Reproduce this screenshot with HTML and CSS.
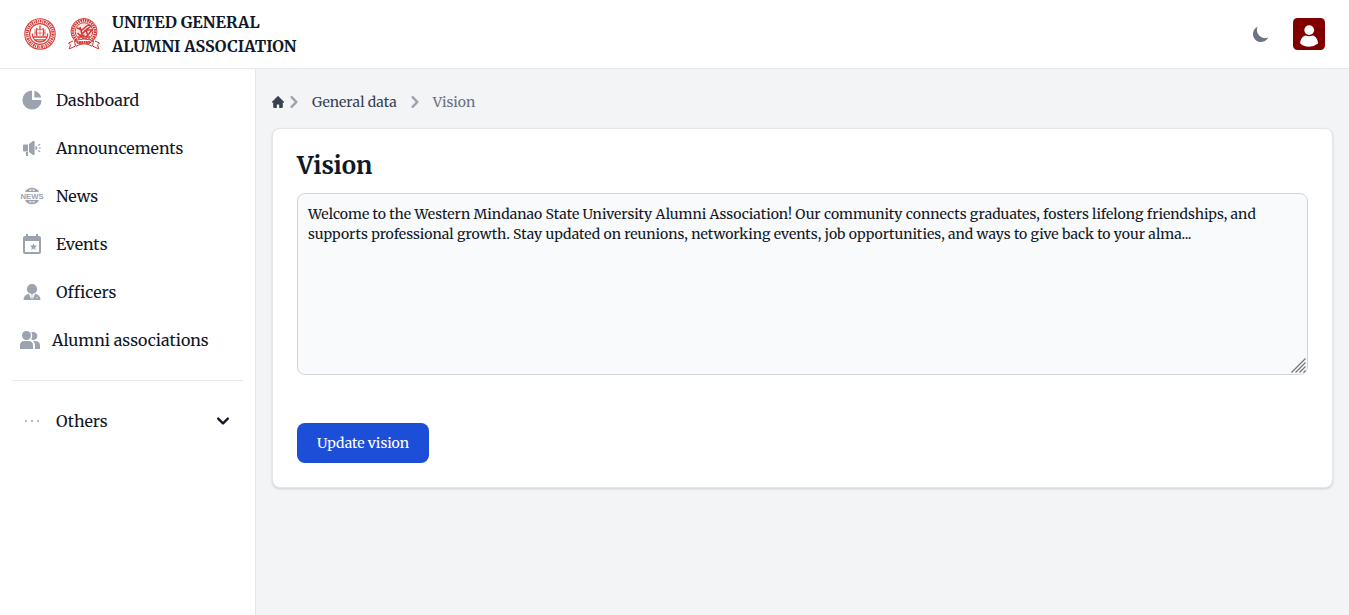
FILE: index.html
```html
<!DOCTYPE html>
<html lang="en">
<head>
<meta charset="utf-8">
<title>Vision</title>
<link rel="stylesheet" href="styles.css">
</head>
<body>
<header class="topbar">
  <div class="brand">
    <svg class="seal" width="32" height="32" viewBox="0 0 32 32" fill="none" stroke="#d8403c">
      <circle cx="16" cy="16" r="15.2" stroke-width="1.1"/>
      <circle cx="16" cy="16" r="12.9" stroke-width="3" stroke-dasharray="1.700 .9 1 .7"/>
      <circle cx="16" cy="16" r="10.400" stroke-width="1.2"/>
      <path d="M8.500 15.500v2q1 6 7.500 6.500 6.500-.5 7.500-6.500v-2M16 7.500v5M13 10q-1.500 4 0 8M19 10q1.500 4 0 8M9.500 19h13M11 21.800h10" stroke-width="1.300"/>
      <path d="M11 11v7M21 11v7M16 13v5M12.500 11.500h7M10.500 15h11" stroke-width="1" opacity=".6"/>
    </svg>
    <svg class="seal" width="32" height="32" viewBox="0 0 32 32" fill="none" stroke="#d33a36">
      <circle cx="16" cy="13.500" r="13" stroke-width="1"/>
      <circle cx="16" cy="13.500" r="11.100" stroke-width="2.8" stroke-dasharray="1.6 .7"/>
      <circle cx="16" cy="13.500" r="8.800" stroke-width="1" fill="#fbe3e1"/>
      <path d="M9 10l5 2 6-5 3 1-5 4 6 0-4 5-3 2M9.500 15q3 4 7 2M12 9l2 7 4-4 2 6M10 19h12M14 21h5" stroke-width="1.5"/>
      <path d="M5 23l-4.500 2 2 2-1.300 4 6.300-3-1-5q9.500-4 19 0l-1 5 6.300 3-1.300-4 2-2-4.500-2M8 28.300q8-5 16 0" fill="#fff" stroke-width="1"/>
      <path d="M9 25.300q7-3 14 0" stroke-width="1.7" stroke-dasharray="1.5 .9"/>
    </svg>
    <div class="brand-name">UNITED GENERAL<br>ALUMNI ASSOCIATION</div>
  </div>
  <div class="actions">
    <svg class="moon" width="20" height="20" viewBox="0 0 20 20" fill="currentColor"><path d="M17.293 13.293A8 8 0 016.707 2.707a8.001 8.001 0 1010.586 10.586z"/></svg>
    <svg class="avatar" width="32" height="32" viewBox="0 0 32 32"><rect width="32" height="32" rx="4.5" fill="#800000"/><circle cx="16.2" cy="12.1" r="4.9" fill="#fff"/><path d="M7.2 25.500C7.200 20 11 17.700 12.600 17.400q3.600 1.600 7.200 0C22 18 25 20.500 25 25.500Q21 28.700 16 28.700T7.200 25.500z" fill="#fff"/></svg>
  </div>
</header>
<div class="shell">
  <aside class="sidebar">
    <nav class="menu">
      <a class="item"><svg class="icon" width="24" height="24" viewBox="0 0 20 20" fill="currentColor"><path d="M2 10a8 8 0 018-8v8h8a8 8 0 11-16 0z"/><path d="M12 2.252A8.014 8.014 0 0117.748 8H12V2.252z"/></svg><span class="label">Dashboard</span></a>
      <a class="item"><svg class="icon" width="24" height="24" viewBox="0 0 24 24" fill="currentColor"><path d="M4 8.500h4v7H4q-1-.1-1-1v-5q0-.9 1-1zM9 8l4-3h1.600v14H13l-4-3zM6 16h2v4H6zM15.400 10q2 .1 2 2t-2 2z"/><path d="M18.200 9.400l2-1.200M18.700 12h2.100M18.200 14.600l2 1.200" fill="none" stroke="currentColor" stroke-width="1.2"/></svg><span class="label">Announcements</span></a>
      <a class="item"><svg class="icon" width="24" height="24" viewBox="0 0 24 24"><g fill="none" stroke="currentColor" stroke-width="1.3"><path d="M5.500 7.600q2.600-3.300 6.500-3.300t6.500 3.300M5.500 16.400q2.600 3.300 6.500 3.300t6.500-3.300M6.500 7.300h11M6.500 16.700h11M12 4.500v3M12 16.500v3M9.800 5q-1.600 1-2 2.500M14.200 5q1.600 1 2 2.500M9.800 19q-1.600-1-2-2.500M14.200 19q1.600-1 2-2.500"/></g><text class="news-text" x="12" y="14.900" text-anchor="middle" textLength="23" lengthAdjust="spacingAndGlyphs">NEWS</text></svg><span class="label">News</span></a>
      <a class="item"><svg class="icon" width="24" height="24" viewBox="0 0 24 24" fill="currentColor" fill-rule="evenodd"><path d="M6 2h2v2h8V2h2v2h1q2 0 2 2v14q0 2-2 2H5q-2 0-2-2V6q0-2 2-2h1zM5 9v11h14V9z"/><path d="M13.500 11.200l1 2.400 2.600.2-2 1.700.6 2.500-2.200-1.400-2.200 1.400.6-2.500-2-1.700 2.600-.2z"/></svg><span class="label">Events</span></a>
      <a class="item"><svg class="icon" width="24" height="24" viewBox="0 0 24 24" fill="currentColor"><circle cx="12" cy="9" r="5.100"/><path d="M3.500 20q0-5 5.500-6.200l2.200 5.700.6-3.500-.7-1.500h1.800l-.7 1.500.6 3.500 2.200-5.700q5.500 1.200 5.500 6.200z"/><path d="M16 17.500h2" stroke="#fff" stroke-width=".5"/></svg><span class="label">Officers</span></a>
      <a class="item"><svg class="icon" width="20" height="20" viewBox="0 0 20 20" fill="currentColor"><circle cx="6.500" cy="5.500" r="4.500"/><path d="M0 19v-3.500Q0 11 4.500 11h4Q13 11 13 15.500V19zM11.200 9.300q2-3.800 0-7Q12.500 2 14 2a4 4 0 11-2.800 7.300zM13 11h2q5 0 5 4.500V19h-5v-4q0-2.300-2-4z"/></svg><span class="label">Alumni associations</span></a>
    </nav>
    <div class="others">
      <a class="item"><svg class="icon" width="24" height="24" viewBox="0 0 24 24" fill="currentColor"><path d="M5 11h2v2H5zM11 11h2v2h-2zM17 11h2v2h-2z" opacity=".75"/></svg><span class="label">Others</span><svg class="caret" width="24" height="24" viewBox="0 0 20 20" fill="currentColor"><path d="M5.293 7.293a1 1 0 011.414 0L10 10.586l3.293-3.293a1 1 0 111.414 1.414l-4 4a1 1 0 01-1.414 0l-4-4a1 1 0 010-1.414z"/></svg></a>
    </div>
  </aside>
  <main class="content">
    <nav class="crumbs">
      <svg class="home" width="12" height="12" viewBox="0 0 20 20" fill="currentColor"><path d="M19.707 9.293l-2-2-7-7a1 1 0 00-1.414 0l-7 7-2 2a1 1 0 001.414 1.414L2 10.414V18a2 2 0 002 2h3a1 1 0 001-1v-4a1 1 0 011-1h2a1 1 0 011 1v4a1 1 0 001 1h3a2 2 0 002-2v-7.586l.293.293a1 1 0 001.414-1.414z"/></svg>
      <svg class="sep sep-first" width="24" height="24" viewBox="0 0 20 20" fill="currentColor"><path d="M7.293 14.707a1 1 0 010-1.414L10.586 10 7.293 6.707a1 1 0 011.414-1.414l4 4a1 1 0 010 1.414l-4 4a1 1 0 01-1.414 0z"/></svg>
      <span class="crumb">General data</span>
      <svg class="sep" width="24" height="24" viewBox="0 0 20 20" fill="currentColor"><path d="M7.293 14.707a1 1 0 010-1.414L10.586 10 7.293 6.707a1 1 0 011.414-1.414l4 4a1 1 0 010 1.414l-4 4a1 1 0 01-1.414 0z"/></svg>
      <span class="crumb current">Vision</span>
    </nav>
    <section class="card">
      <h1 class="title">Vision</h1>
      <div class="field">
        <div class="editor"><span>Welcome to the Western Mindanao State University Alumni Association! Our community connects graduates, fosters lifelong friendships, and</span><br><span>supports professional growth. Stay updated on reunions, networking events, job opportunities, and ways to give back to your alma...</span></div>
        <svg class="grip" width="16" height="16" viewBox="0 0 16 16" fill="none" stroke="#777" stroke-width="1.300"><path d="M.5 14.500l14-14M4.500 14.500l10-10M8.500 14.500l6-6M12.500 14.500l2-2"/></svg>
      </div>
      <button class="submit">Update vision</button>
    </section>
  </main>
</div>
</body>
</html>
```
FILE: styles.css
```css
* { box-sizing: border-box; }
body {
  margin: 0;
  height: 615px;
  overflow: hidden;
  display: flex;
  flex-direction: column;
  background: #f3f4f6;
  color: #111827;
  font-family: "Merriweather", "DejaVu Serif Condensed", "DejaVu Serif", serif;
}
svg { display: block; flex: none; }
span { white-space: nowrap; }
.topbar {
  height: 69px;
  flex: none;
  display: flex;
  align-items: center;
  justify-content: space-between;
  padding: 0 24px;
  background: #fff;
  border-bottom: 1px solid #e5e7eb;
}
.brand { display: flex; align-items: center; gap: 12px; }
.brand-name { font-size: 16px; line-height: 24px; font-weight: 700; white-space: nowrap; }
.actions { display: flex; align-items: center; gap: 22px; color: #6b7280; }
.shell { flex: 1; display: flex; }
.sidebar {
  width: 256px;
  padding: 11px 12px;
  background: #fff;
  border-right: 1px solid #e5e7eb;
}
.menu { display: flex; flex-direction: column; gap: 8px; }
.item { height: 40px; display: flex; align-items: center; padding: 0 8px; font-size: 16px; }
.icon { color: #9ca3af; overflow: visible; }
.label { margin-left: 12px; }
.others { margin-top: 20px; padding-top: 20px; border-top: 1px solid #e5e7eb; }
.caret { margin-left: auto; }
.news-text { font: 700 8px "Liberation Sans", sans-serif; fill: currentColor; }
.content { flex: 1; padding: 21px 16px; }
.crumbs { height: 24px; display: flex; align-items: center; font-size: 14px; color: #374151; }
.sep { color: #9ca3af; margin: 0 6px; }
.sep-first { margin: 0 6px 0 -2px; }
.current { color: #6b7280; }
.card {
  height: 360px;
  margin-top: 14px;
  padding: 20px 24px 24px;
  background: #fff;
  border: 1px solid #e5e7eb;
  border-radius: 8px;
  box-shadow: 0 1px 3px rgba(0,0,0,.1), 0 1px 2px rgba(0,0,0,.06);
}
.title { margin: 0; height: 44px; padding-top: 1px; font-size: 24px; line-height: 32px; font-weight: 700; }
.field { position: relative; height: 182px; }
.editor {
  height: 182px;
  padding: 10px;
  background: #f9fafb;
  border: 1px solid #d1d5db;
  border-radius: 8px;
  font-size: 14px;
  line-height: 20px;
}
.grip { position: absolute; right: 1px; bottom: 1px; }
.submit {
  margin-top: 48px;
  width: 132px;
  height: 40px;
  padding: 0;
  border: 0;
  border-radius: 8px;
  background: #1d4ed8;
  color: #fff;
  font: 14px/20px "Merriweather", "DejaVu Serif Condensed", serif;
}
```
